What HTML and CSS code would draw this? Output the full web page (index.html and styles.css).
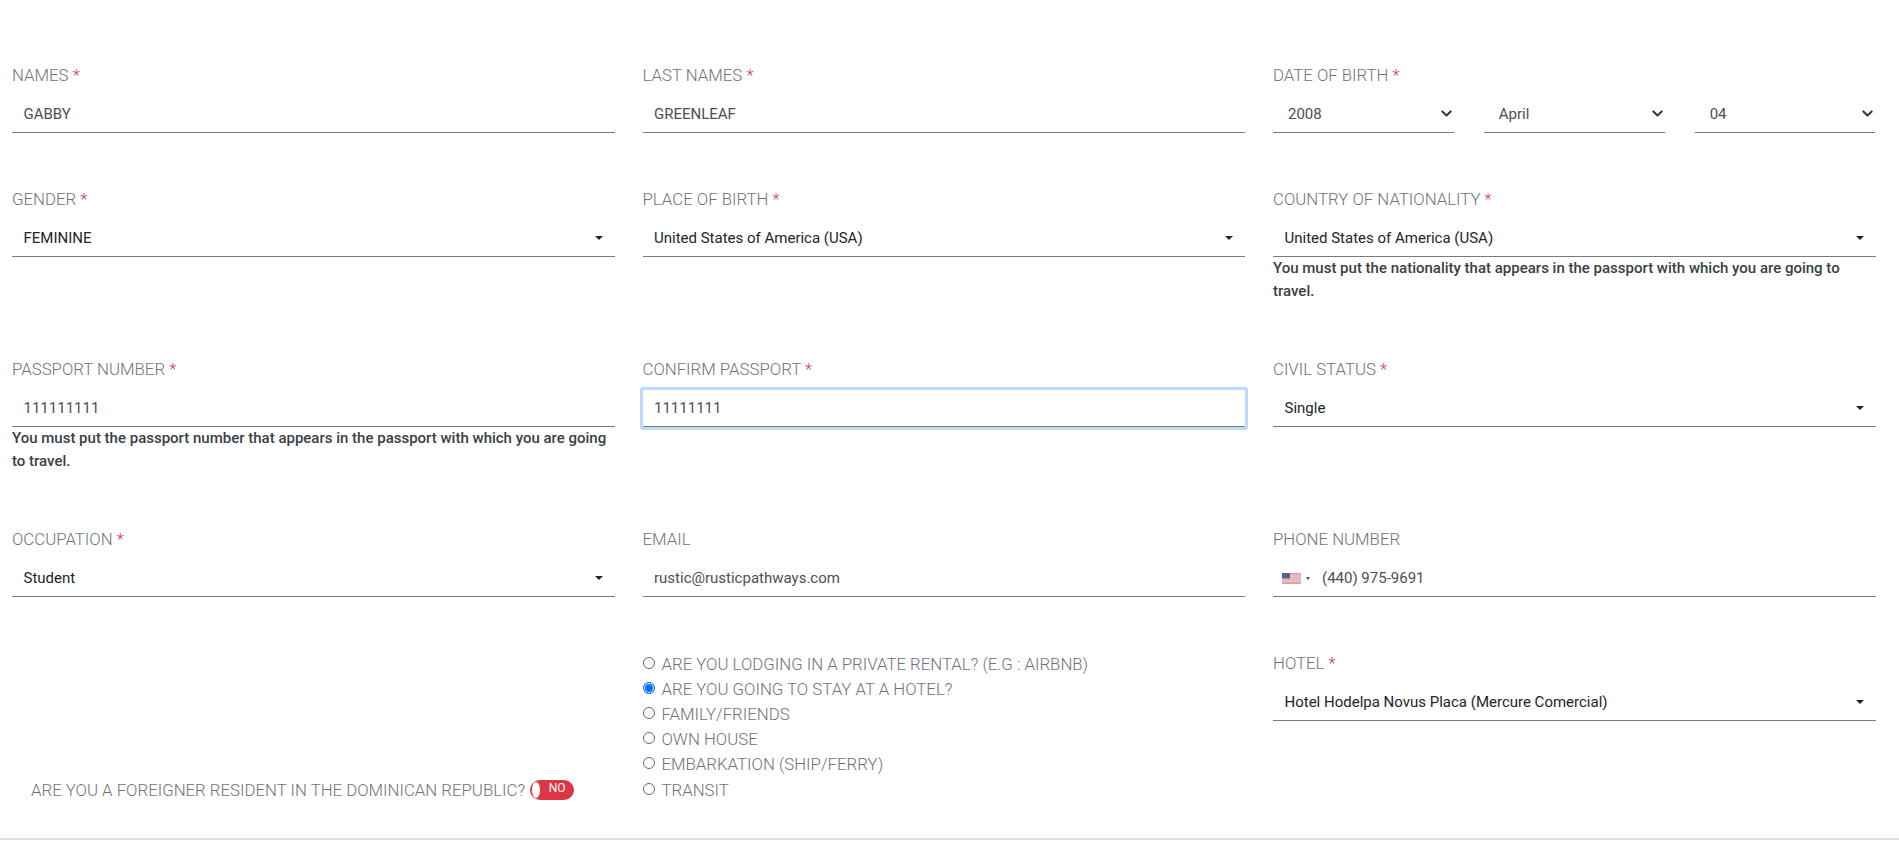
FILE: index.html
```html
<!DOCTYPE html>
<html lang="en">
<head>
<meta charset="utf-8">
<title>Traveler form</title>
<link rel="stylesheet" href="styles.css">
</head>
<body>
<main class="page">
  <form class="grid">
    <div class="field">
      <div class="label">NAMES <span class="req">*</span></div>
      <div class="control input">GABBY</div>
    </div>
    <div class="field">
      <div class="label">LAST NAMES <span class="req">*</span></div>
      <div class="control input">GREENLEAF</div>
    </div>
    <div class="field">
      <div class="label">DATE OF BIRTH <span class="req">*</span></div>
      <div class="dates">
        <div class="control date"><span>2008</span><svg class="chev" viewBox="0 0 16 16"><path d="M2 5l6 6 6-6" fill="none" stroke="#343a40" stroke-width="3" stroke-linecap="round" stroke-linejoin="round"/></svg></div>
        <div class="control date"><span>April</span><svg class="chev" viewBox="0 0 16 16"><path d="M2 5l6 6 6-6" fill="none" stroke="#343a40" stroke-width="3" stroke-linecap="round" stroke-linejoin="round"/></svg></div>
        <div class="control date"><span>04</span><svg class="chev" viewBox="0 0 16 16"><path d="M2 5l6 6 6-6" fill="none" stroke="#343a40" stroke-width="3" stroke-linecap="round" stroke-linejoin="round"/></svg></div>
      </div>
    </div>

    <div class="field">
      <div class="label">GENDER <span class="req">*</span></div>
      <div class="control select"><span>FEMININE</span><i class="caret"></i></div>
    </div>
    <div class="field">
      <div class="label">PLACE OF BIRTH <span class="req">*</span></div>
      <div class="control select"><span>United States of America (USA)</span><i class="caret"></i></div>
    </div>
    <div class="field">
      <div class="label">COUNTRY OF NATIONALITY <span class="req">*</span></div>
      <div class="control select"><span>United States of America (USA)</span><i class="caret"></i></div>
      <p class="hint">You must put the nationality that appears in the passport with which you are going to travel.</p>
    </div>

    <div class="field">
      <div class="label">PASSPORT NUMBER <span class="req">*</span></div>
      <div class="control input">111111111</div>
      <p class="hint">You must put the passport number that appears in the passport with which you are going to travel.</p>
    </div>
    <div class="field">
      <div class="label">CONFIRM PASSPORT <span class="req">*</span></div>
      <div class="control input focused">11111111</div>
    </div>
    <div class="field">
      <div class="label">CIVIL STATUS <span class="req">*</span></div>
      <div class="control select"><span>Single</span><i class="caret"></i></div>
    </div>

    <div class="field">
      <div class="label">OCCUPATION <span class="req">*</span></div>
      <div class="control select"><span>Student</span><i class="caret"></i></div>
    </div>
    <div class="field">
      <div class="label">EMAIL</div>
      <div class="control input">rustic@rusticpathways.com</div>
    </div>
    <div class="field">
      <div class="label">PHONE NUMBER</div>
      <div class="control phone">
        <svg class="flag" viewBox="0 0 19 11">
          <rect width="19" height="11" fill="#e09aa3"/>
          <rect y="1.7" width="19" height=".8" fill="#f3dcdf"/>
          <rect y="3.4" width="19" height=".8" fill="#f3dcdf"/>
          <rect y="5.1" width="19" height=".8" fill="#f3dcdf"/>
          <rect y="6.8" width="19" height=".8" fill="#f3dcdf"/>
          <rect y="8.5" width="19" height=".8" fill="#f3dcdf"/>
          <rect width="8" height="5.5" fill="#5a5f92"/>
        </svg>
        <i class="mini-caret"></i>
        <span>(440) 975-9691</span>
      </div>
    </div>

    <div class="field resident">
      <span class="resident-text">ARE YOU A FOREIGNER RESIDENT IN THE DOMINICAN REPUBLIC?</span>
      <span class="toggle"><i class="knob"></i><span class="toggle-text">NO</span></span>
    </div>
    <div class="field radios">
      <div class="radio"><i class="dot"></i><span>ARE YOU LODGING IN A PRIVATE RENTAL? (E.G : AIRBNB)</span></div>
      <div class="radio"><i class="dot on"></i><span>ARE YOU GOING TO STAY AT A HOTEL?</span></div>
      <div class="radio"><i class="dot"></i><span>FAMILY/FRIENDS</span></div>
      <div class="radio"><i class="dot"></i><span>OWN HOUSE</span></div>
      <div class="radio"><i class="dot"></i><span>EMBARKATION (SHIP/FERRY)</span></div>
      <div class="radio"><i class="dot"></i><span>TRANSIT</span></div>
    </div>
    <div class="field">
      <div class="label">HOTEL <span class="req">*</span></div>
      <div class="control select"><span>Hotel Hodelpa Novus Placa (Mercure Comercial)</span><i class="caret"></i></div>
    </div>
  </form>
</main>
</body>
</html>
```
FILE: styles.css
```css
* { box-sizing: border-box; }
html, body { margin: 0; height: 841px; overflow: hidden; background: #fff; }
body { font-family: Roboto, "Liberation Sans", sans-serif; }

.page {
  height: 840px;
  padding: 63.6px 23.5px 0 12px;
  border-bottom: 2px solid #dee2e6;
}

.grid {
  display: grid;
  grid-template-columns: repeat(3, 602.5px);
  column-gap: 28px;
  grid-template-rows: 124.6px 170px 170px 124px 150px;
}

.label {
  font-size: 16.8px;
  font-weight: 300;
  line-height: 22px;
  color: #6f7378;
  margin-bottom: 10px;
}
.req { color: #dc3545; }

.control {
  display: flex;
  align-items: center;
  height: 37px;
  font-size: 15px;
  border-bottom: 1px solid #7b7b7b;
  padding: 0.6px 12px 0 11.5px;
}
.input { color: #495057; }
.select { color: #212529; justify-content: space-between; }
.focused {
  box-shadow: 0 0 0 3px #bbdafc;
  border-radius: 1px;
}

.caret {
  width: 0;
  height: 0;
  border-left: 4px solid transparent;
  border-right: 4px solid transparent;
  border-top: 4px solid #212529;
}

.dates {
  display: grid;
  grid-template-columns: repeat(3, 1fr);
  column-gap: 30px;
}
.date {
  justify-content: space-between;
  color: #495057;
  padding: 0.6px 2px 0 15px;
}
.chev { width: 11px; height: 11px; }

.hint {
  margin: 0;
  font-size: 15px;
  font-weight: 500;
  line-height: 23px;
  color: #3a4046;
}

.phone { color: #495057; padding-left: 9px; }
.flag { width: 19px; height: 11px; }
.mini-caret {
  width: 0;
  height: 0;
  margin-left: 5px;
  border-left: 2px solid transparent;
  border-right: 2px solid transparent;
  border-top: 3px solid #555;
}
.phone span { margin-left: 12px; }

.resident {
  display: flex;
  align-items: center;
  align-self: start;
  margin-top: 126px;
  padding-left: 19px;
  height: 24px;
  font-size: 16.8px;
  font-weight: 300;
  color: #6f7378;
}
.toggle {
  position: relative;
  display: inline-block;
  flex: none;
  width: 44px;
  height: 20px;
  margin-left: 5px;
  border-radius: 10px;
  background: #dc3545;
  color: #fff;
  font-size: 12px;
  font-weight: 400;
  line-height: 17px;
  text-align: center;
  padding-left: 10px;
}
.knob {
  position: absolute;
  left: 2px;
  top: 2px;
  width: 8px;
  height: 16px;
  border-radius: 50%;
  background: #fff;
}

.radios {
  display: flex;
  flex-direction: column;
  row-gap: 2.2px;
}
.radio {
  display: flex;
  align-items: center;
  height: 23px;
  font-size: 16.8px;
  font-weight: 300;
  color: #6f7378;
}
.dot {
  width: 12px;
  height: 12px;
  margin: 0 7px 2px 0;
  border-radius: 50%;
  border: 1px solid #666;
  background: #fff;
  flex: none;
}
.dot.on {
  border: 1px solid #0d6efd;
  background: #0d6efd;
  box-shadow: inset 0 0 0 1px #fff;
}
```
